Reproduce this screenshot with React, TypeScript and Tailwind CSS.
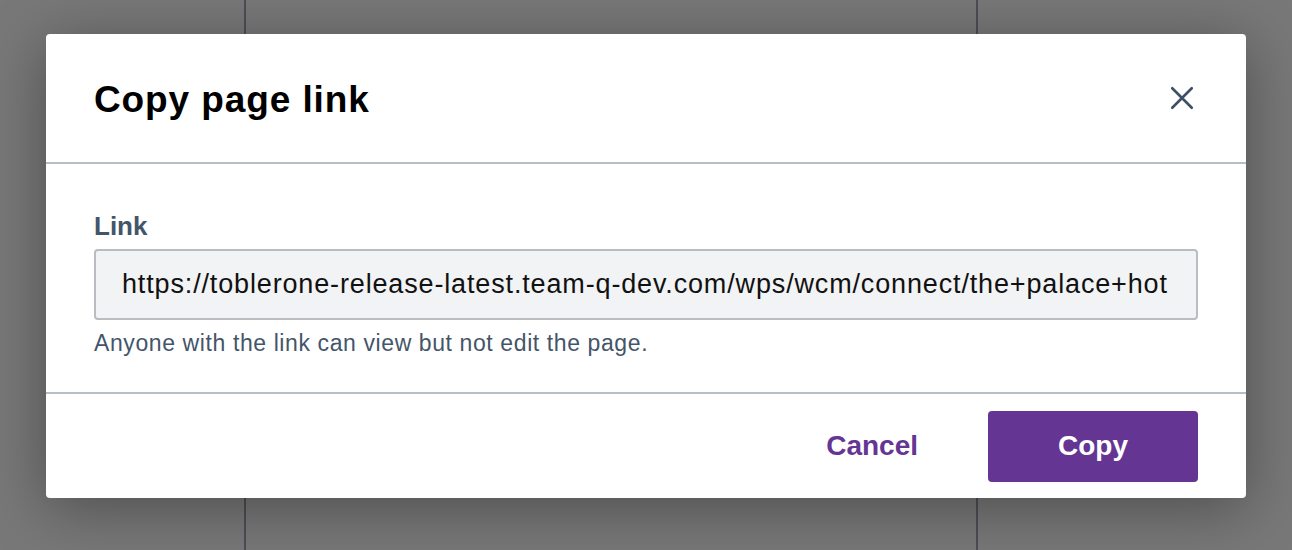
import React from 'react';

const CloseIcon = () => (
  <svg width="26" height="26" viewBox="0 0 24 24" fill="none" stroke="#3e4f63" strokeWidth="2.4" strokeLinecap="round">
    <path d="M3 3L21 21M21 3L3 21" />
  </svg>
);

const App = () => {
  // only the part of the link that fits in the field is shown
  const url = 'https://toblerone-release-latest.team-q-dev.com/wps/wcm/connect/the+palace+hot';

  return (
    <div className="relative h-[550px] w-[1292px] overflow-hidden bg-[#787878]" style={{ fontFamily: '"Liberation Sans", Arial, sans-serif' }}>
      {/* page behind the overlay */}
      <div className="flex h-full">
        <div className="w-[246px] border-r-2 border-[#4b4f55]"></div>
        <div className="w-[732px] border-r-2 border-[#4b4f55]"></div>
        <div className="flex-1"></div>
      </div>

      <div className="absolute left-[46px] top-[34px] w-[1200px] rounded-[4px] bg-white shadow-[0_10px_60px_rgba(0,0,0,0.35)]">
        <div className="flex h-[130px] items-center justify-between border-b-2 border-[#b7bec7] pl-12 pr-12">
          <h1 className="mt-[2px] text-[37px] font-bold leading-none tracking-[0.9px] text-black">Copy page link</h1>
          <button className="flex h-8 w-8 items-center justify-center">
            <CloseIcon />
          </button>
        </div>

        <div className="border-b-2 border-[#b7bec7] px-12 pt-[46px] pb-[36px]">
          <label className="block text-[26px] font-bold leading-[32px] text-[#44556a]">Link</label>
          <div className="mt-[7px] flex h-[71px] items-center overflow-hidden rounded-[4px] border-2 border-[#b9bcc0] bg-[#f2f3f5] pl-[26px] pr-[26px]">
            <span className="whitespace-nowrap text-[27px] tracking-[0.85px] text-[#111]">{url}</span>
          </div>
          <p className="mt-[10px] text-[23px] leading-[26px] tracking-[0.6px] text-[#44556a]">Anyone with the link can view but not edit the page.</p>
        </div>

        <div className="flex h-[104px] items-center justify-end pr-12">
          <button className="mr-[70px] text-[28px] font-bold text-[#653594]">Cancel</button>
          <button className="h-[71px] w-[210px] rounded-[4px] bg-[#653594] text-[28px] font-bold text-white">Copy</button>
        </div>
      </div>
    </div>
  );
};

export default App;
